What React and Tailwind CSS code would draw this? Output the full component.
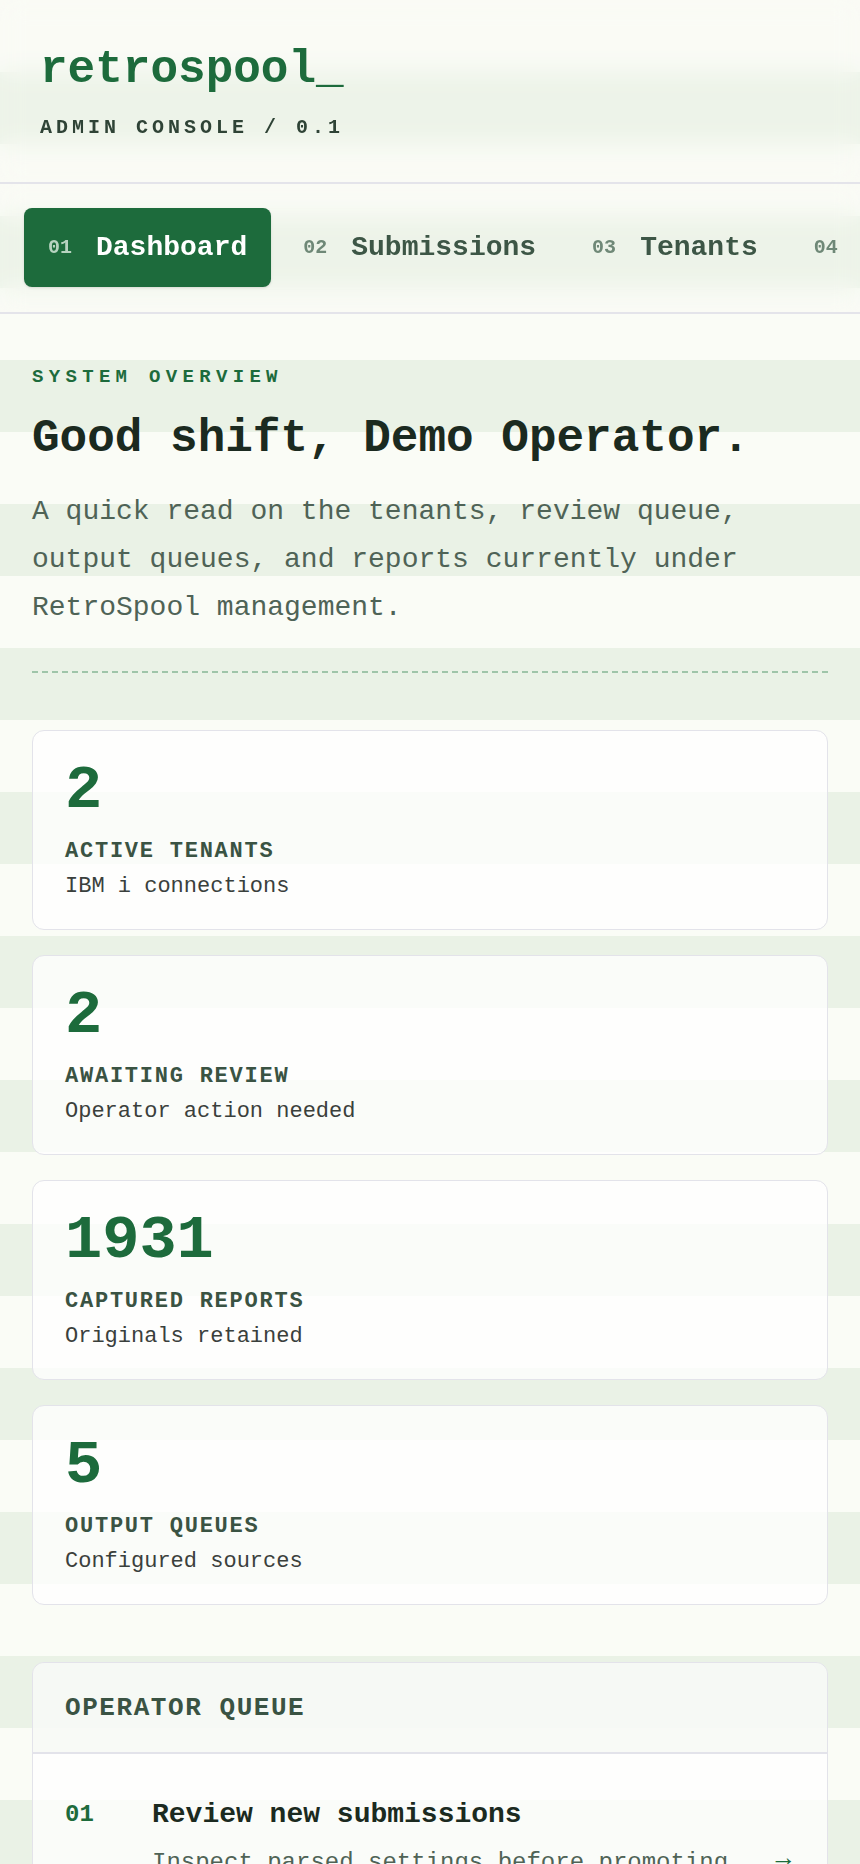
const stats = [
  { value: "2", label: "ACTIVE TENANTS", desc: "IBM i connections" },
  { value: "2", label: "AWAITING REVIEW", desc: "Operator action needed" },
  { value: "1931", label: "CAPTURED REPORTS", desc: "Originals retained" },
  { value: "5", label: "OUTPUT QUEUES", desc: "Configured sources" },
];

const tabs = [
  { n: "01", label: "Dashboard", active: true },
  { n: "02", label: "Submissions" },
  { n: "03", label: "Tenants" },
  { n: "04", label: "Reports" },
];

export default function App() {
  return (
    <div className="min-h-screen bg-[repeating-linear-gradient(to_bottom,#fafcf6_0px,#fafcf6_72px,#eaf2e6_72px,#eaf2e6_144px)] font-['Liberation_Mono',monospace] text-[#1b2a20]">
      <header className="h-[184px] border-b-2 border-[#e4e4ea] bg-[#fafcf6]/20 backdrop-blur-md px-10 pt-[47px]">
        <div className="text-[46px] leading-none font-bold text-[#1d6b3c]">retrospool_</div>
        <div className="mt-[23px] text-[20px] leading-[24px] font-bold tracking-[0.2em] text-[#2f4336]">
          ADMIN CONSOLE / 0.1
        </div>
      </header>

      <nav className="h-[130px] border-b-2 border-[#e4e4ea] bg-[#fafcf6]/20 backdrop-blur-md pl-6 pt-6 overflow-hidden">
        <div className="flex gap-2 whitespace-nowrap">
          {tabs.map((t) => (
            <div
              key={t.n}
              className={
                "flex items-center gap-6 rounded-lg px-6 py-[18px] shrink-0 " +
                (t.active ? "bg-[#1d6b3c] shadow-sm" : "")
              }
            >
              <span
                className={
                  "text-[20px] font-bold " + (t.active ? "text-[#b7d3c0]" : "text-[#6f8877]")
                }
              >
                {t.n}
              </span>
              <span
                className={
                  "text-[28px] leading-[43px] font-bold " + (t.active ? "text-white" : "text-[#3d5646]")
                }
              >
                {t.label}
              </span>
            </div>
          ))}
        </div>
      </nav>

      <main className="px-8 pt-[51px] pb-10">
        <section>
          <div className="text-[19px] leading-[24px] font-bold tracking-[0.28em] text-[#1d6b3c]">
            SYSTEM OVERVIEW
          </div>
          <h1 className="mt-6 text-[46px] leading-[53px] font-bold text-[#1b2a20]">
            Good shift, Demo Operator.
          </h1>
          <p className="mt-[22px] text-[28px] leading-[48px] text-[#4f6356]">
            A quick read on the tenants, review queue, output queues, and reports currently under
            RetroSpool management.
          </p>
          <div className="mt-[39px] h-[2px] bg-[repeating-linear-gradient(to_right,#9fc5a9_0px,#9fc5a9_6px,transparent_6px,transparent_10px)]" />
        </section>

        <div className="mt-[57px] flex flex-col gap-[25px]">
          {stats.map((s) => (
            <div
              key={s.label}
              className="rounded-xl border border-[#e3e3ea] bg-white/75 px-8 pt-[29px] pb-[28px]"
            >
              <div className="text-[62px] leading-none font-bold text-[#1d6b3c]">{s.value}</div>
              <div className="mt-[16px] text-[22px] leading-[28px] font-bold tracking-[0.08em] text-[#3a5343]">
                {s.label}
              </div>
              <div className="mt-[7px] text-[22px] leading-[28px] text-[#3a403c]">{s.desc}</div>
            </div>
          ))}
        </div>

        <div className="mt-[57px] rounded-xl border border-[#e3e3ea] bg-white/75 overflow-hidden">
          <div className="border-b-2 border-[#e3e3ea] bg-[#f3f6f1]/60 px-8 pt-[26px] pb-[24px]">
            <div className="text-[26px] leading-[39px] font-bold tracking-[0.06em] text-[#3a5343]">
              OPERATOR QUEUE
            </div>
          </div>
          <div className="flex items-start px-8 pt-[43px] pb-8">
            <div className="w-[87px] shrink-0 text-[24px] leading-[36px] font-bold text-[#1d6b3c]">01</div>
            <div className="flex-1 min-w-0">
              <div className="text-[28px] leading-[36px] font-bold text-[#1b2a20]">Review new submissions</div>
              <div className="mt-[12px] text-[24px] leading-[36px] text-[#4f6356]">
                Inspect parsed settings before promoting
              </div>
            </div>
            <div className="self-end pr-1 pb-1 text-[26px] leading-[36px] text-[#1d6b3c]">→</div>
          </div>
        </div>
      </main>
    </div>
  );
}
